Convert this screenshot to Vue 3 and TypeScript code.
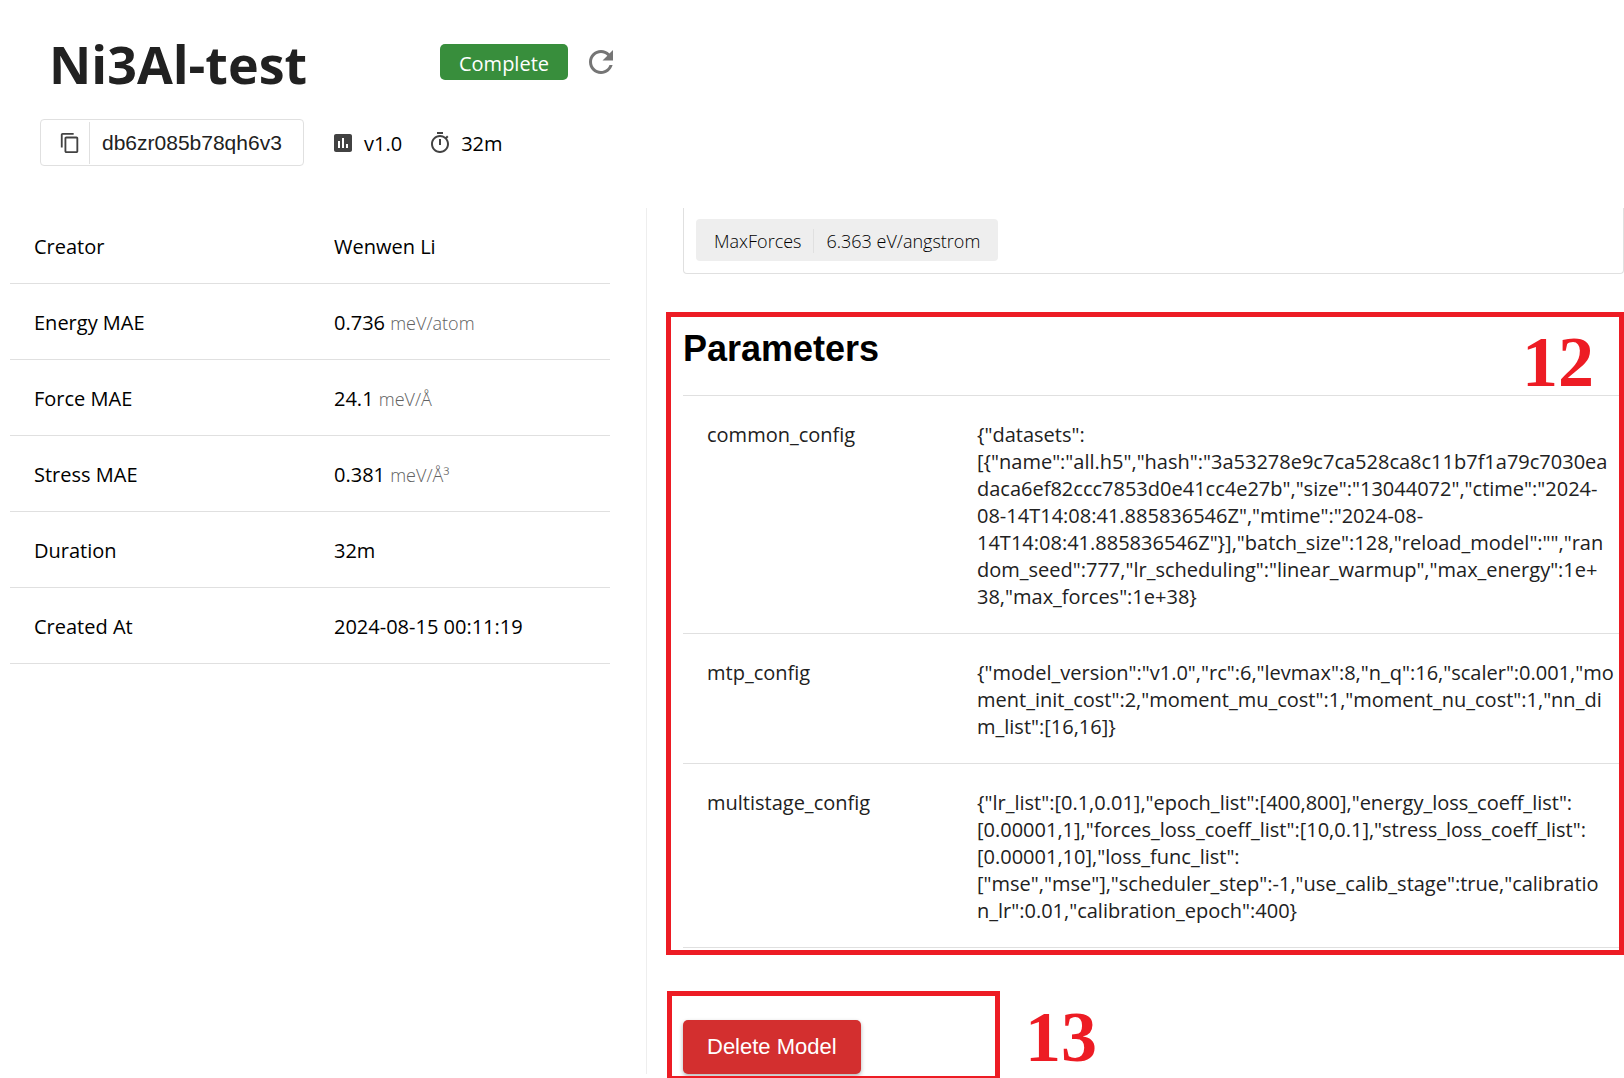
<script setup lang="ts">
interface Fact {
  label: string
  value: string
  unit?: string
}

interface Parameter {
  name: string
  lines: string[]
}

const facts: Fact[] = [
  { label: 'Creator', value: 'Wenwen Li' },
  { label: 'Energy MAE', value: '0.736', unit: 'meV/atom' },
  { label: 'Force MAE', value: '24.1', unit: 'meV/Å' },
  { label: 'Stress MAE', value: '0.381', unit: 'meV/Å³' },
  { label: 'Duration', value: '32m' },
  { label: 'Created At', value: '2024-08-15 00:11:19' },
]

const parameters: Parameter[] = [
  {
    name: 'common_config',
    lines: [
      '{"datasets":',
      '[{"name":"all.h5","hash":"3a53278e9c7ca528ca8c11b7f1a79c7030ea',
      'daca6ef82ccc7853d0e41cc4e27b","size":"13044072","ctime":"2024-',
      '08-14T14:08:41.885836546Z","mtime":"2024-08-',
      '14T14:08:41.885836546Z"}],"batch_size":128,"reload_model":"","ran',
      'dom_seed":777,"lr_scheduling":"linear_warmup","max_energy":1e+',
      '38,"max_forces":1e+38}',
    ],
  },
  {
    name: 'mtp_config',
    lines: [
      '{"model_version":"v1.0","rc":6,"levmax":8,"n_q":16,"scaler":0.001,"mo',
      'ment_init_cost":2,"moment_mu_cost":1,"moment_nu_cost":1,"nn_di',
      'm_list":[16,16]}',
    ],
  },
  {
    name: 'multistage_config',
    lines: [
      '{"lr_list":[0.1,0.01],"epoch_list":[400,800],"energy_loss_coeff_list":',
      '[0.00001,1],"forces_loss_coeff_list":[10,0.1],"stress_loss_coeff_list":',
      '[0.00001,10],"loss_func_list":',
      '["mse","mse"],"scheduler_step":-1,"use_calib_stage":true,"calibratio',
      'n_lr":0.01,"calibration_epoch":400}',
    ],
  },
]
</script>

<template>
  <div class="page">
    <header class="header">
      <div class="title-row">
        <h1 class="title">Ni3Al-test</h1>
        <span class="status">Complete</span>
        <button class="icon-button" type="button" aria-label="Refresh">
          <svg class="refresh-icon" viewBox="0 0 24 24" aria-hidden="true">
            <path d="M17.65 6.35C16.2 4.9 14.21 4 12 4c-4.42 0-7.99 3.58-7.99 8s3.57 8 7.99 8c3.73 0 6.84-2.55 7.73-6h-2.08c-.82 2.33-3.04 4-5.65 4-3.31 0-6-2.69-6-6s2.69-6 6-6c1.66 0 3.14.69 4.22 1.78L13 11h7V4l-2.35 2.35z" />
          </svg>
        </button>
      </div>
      <div class="meta-row">
        <div class="id-box">
          <button class="copy" type="button" aria-label="Copy ID">
            <svg class="copy-icon" viewBox="0 0 24 24" aria-hidden="true">
              <path d="M16 1H4c-1.1 0-2 .9-2 2v14h2V3h12V1zm3 4H8c-1.1 0-2 .9-2 2v14c0 1.1.9 2 2 2h11c1.1 0 2-.9 2-2V7c0-1.1-.9-2-2-2zm0 16H8V7h11v14z" />
            </svg>
          </button>
          <span class="id-text">db6zr085b78qh6v3</span>
        </div>
        <span class="meta">
          <svg class="meta-icon" viewBox="0 0 24 24" aria-hidden="true">
            <path d="M19 3H5c-1.100 0-2 .9-2 2v14c0 1.100.9 2 2 2h14c1.100 0 2-.9 2-2V5c0-1.100-.9-2-2-2zM9 17H7v-7h2v7zm4 0h-2V7h2v10zm4 0h-2v-4h2v4z" />
          </svg>
          <span class="meta-text">v1.0</span>
        </span>
        <span class="meta">
          <svg class="meta-icon" viewBox="0 0 24 24" aria-hidden="true">
            <path d="M15 1H9v2h6V1zm-4 13h2V8h-2v6zm8.030-6.610 1.420-1.420c-.430-.510-.9-.990-1.410-1.410l-1.420 1.420C16.070 4.740 14.120 4 12 4c-4.970 0-9 4.030-9 9s4.020 9 9 9 9-4.030 9-9c0-2.120-.740-4.070-1.970-5.610zM12 20c-3.870 0-7-3.130-7-7s3.130-7 7-7 7 3.130 7 7-3.130 7-7 7z" />
          </svg>
          <span class="meta-text">32m</span>
        </span>
      </div>
    </header>

    <div class="body">
      <aside class="side">
        <table class="facts">
          <tbody>
            <tr v-for="fact in facts" :key="fact.label">
              <th scope="row">{{ fact.label }}</th>
              <td>
                {{ fact.value }} <span v-if="fact.unit" class="unit">{{ fact.unit }}</span>
              </td>
            </tr>
          </tbody>
        </table>
      </aside>

      <main class="main">
        <div class="card">
          <div class="chip">
            <span class="chip-name">MaxForces</span>
            <span class="chip-value">6.363 eV/angstrom</span>
          </div>
        </div>

        <section class="params">
          <h2 class="heading">Parameters</h2>
          <table class="params-table">
            <tbody>
              <tr v-for="parameter in parameters" :key="parameter.name">
                <th scope="row">{{ parameter.name }}</th>
                <td>{{ parameter.lines.join('\n') }}</td>
              </tr>
            </tbody>
          </table>
          <div class="frame frame-params"></div>
          <span class="mark mark-params">12</span>
        </section>

        <section class="actions">
          <button class="delete" type="button">Delete Model</button>
          <div class="frame frame-actions"></div>
          <span class="mark mark-actions">13</span>
        </section>
      </main>
    </div>
  </div>
</template>

<style>
body {
  margin: 0;
  background: #fff;
}
</style>

<style scoped>
.page {
  box-sizing: border-box;
  height: 100vh;
  overflow: hidden;
  display: flex;
  flex-direction: column;
  font-family: "Open Sans", "Noto Sans", sans-serif;
  font-size: 20px;
  line-height: 27px;
  color: #000;
}

.page *,
.page *::before {
  box-sizing: border-box;
}

.header {
  flex: none;
  height: 208px;
  padding: 28px 40px 0;
}

.title-row {
  display: flex;
  align-items: center;
  height: 68px;
}

.title {
  width: 388px;
  margin: 0;
  padding: 4px 0 0 9px;
  font-size: 52px;
  line-height: 64px;
  font-weight: 700;
  color: #212121;
}

.status {
  width: 128px;
  height: 36px;
  margin: 0 15px 0 12px;
  border-radius: 5px;
  background: #388e3c;
  color: #fff;
  line-height: 39px;
  text-align: center;
}

.icon-button {
  display: flex;
  padding: 0;
  border: 0;
  background: none;
}

.refresh-icon {
  width: 36px;
  height: 36px;
  fill: #757575;
}

.meta-row {
  display: flex;
  align-items: center;
  margin-top: 23px;
}

.id-box {
  display: flex;
  align-items: center;
  width: 264px;
  height: 47px;
  margin-right: 27px;
  border: 1px solid #e0e0e0;
  border-radius: 4px;
}

.copy {
  display: flex;
  align-items: center;
  justify-content: flex-end;
  width: 49px;
  height: 42px;
  padding: 0 8px 0 0;
  border: 0;
  border-right: 1px solid #e0e0e0;
  background: none;
}

.copy-icon {
  width: 22px;
  height: 22px;
  fill: #424242;
}

.id-text {
  padding-left: 12px;
  font-family: "Liberation Sans", Arial, sans-serif;
  font-size: 21px;
  color: #212121;
}

.meta {
  display: flex;
  align-items: center;
  gap: 9px;
  margin-right: 26px;
}

.meta-text {
  padding-top: 2px;
}

.meta-icon {
  width: 24px;
  height: 24px;
  fill: #424242;
}

.body {
  flex: 1;
  display: flex;
  min-height: 0;
}

.side {
  flex: none;
  width: 647px;
  height: 866px;
  padding: 0 36px 0 10px;
  border-right: 1px solid #eee;
}

table {
  width: 100%;
  border-collapse: separate;
  border-spacing: 0;
  table-layout: fixed;
}

th,
td {
  padding: 25px 24px 23px;
  border-bottom: 1px solid #e0e0e0;
  font-weight: 400;
  text-align: left;
  vertical-align: top;
}

.facts td {
  padding-right: 0;
}

.unit {
  font-size: 18px;
  line-height: 24px;
  font-weight: 300;
  color: #616161;
}

.main {
  flex: 1;
  min-width: 0;
  padding-left: 36px;
}

.card {
  height: 66px;
  padding: 11px 12px;
  border: 1px solid #e0e0e0;
  border-top: 0;
  border-radius: 0 0 4px 4px;
}

.chip {
  display: inline-flex;
  align-items: center;
  height: 42px;
  padding: 2px 18px 0;
  border-radius: 4px;
  background: #eee;
  font-size: 18px;
  line-height: 24px;
  font-weight: 300;
  color: #000;
}

.chip-name {
  padding-right: 12px;
  border-right: 1px solid #e0e0e0;
}

.chip-value {
  padding-left: 12px;
}

.params {
  position: relative;
  margin-top: 38px;
  height: 643px;
}

.heading {
  margin: 0;
  height: 84px;
  padding-top: 16px;
  border-bottom: 1px solid #e0e0e0;
  font-family: "Liberation Sans", Arial, sans-serif;
  font-size: 36px;
  line-height: 42px;
  font-weight: 700;
}

.params-table {
  color: #212121;
}

.params-table th {
  width: 270px;
}

.params-table td {
  padding-right: 0;
  white-space: pre;
}

.frame {
  position: absolute;
  border: 5px solid #ed1c24;
  pointer-events: none;
}

.frame-params {
  inset: 0 0 0 -17px;
}

.mark {
  position: absolute;
  font-family: "Liberation Serif", "Times New Roman", serif;
  font-size: 72px;
  line-height: 80px;
  font-weight: 700;
  color: #ed1c24;
}

.mark-params {
  top: 10px;
  right: 30px;
}

.actions {
  position: relative;
  margin-top: 36px;
  padding-top: 29px;
}

.delete {
  display: block;
  height: 54px;
  padding: 0 24px 2px;
  border: 0;
  border-radius: 5px;
  background: #d32f2f;
  box-shadow: 0 2px 4px rgba(0, 0, 0, 0.3);
  font-family: "Liberation Sans", Arial, sans-serif;
  font-size: 22px;
  line-height: 27px;
  color: #fff;
}

.frame-actions {
  top: 0;
  left: -16px;
  width: 333px;
  height: 90px;
}

.mark-actions {
  top: 6px;
  left: 342px;
}
</style>
